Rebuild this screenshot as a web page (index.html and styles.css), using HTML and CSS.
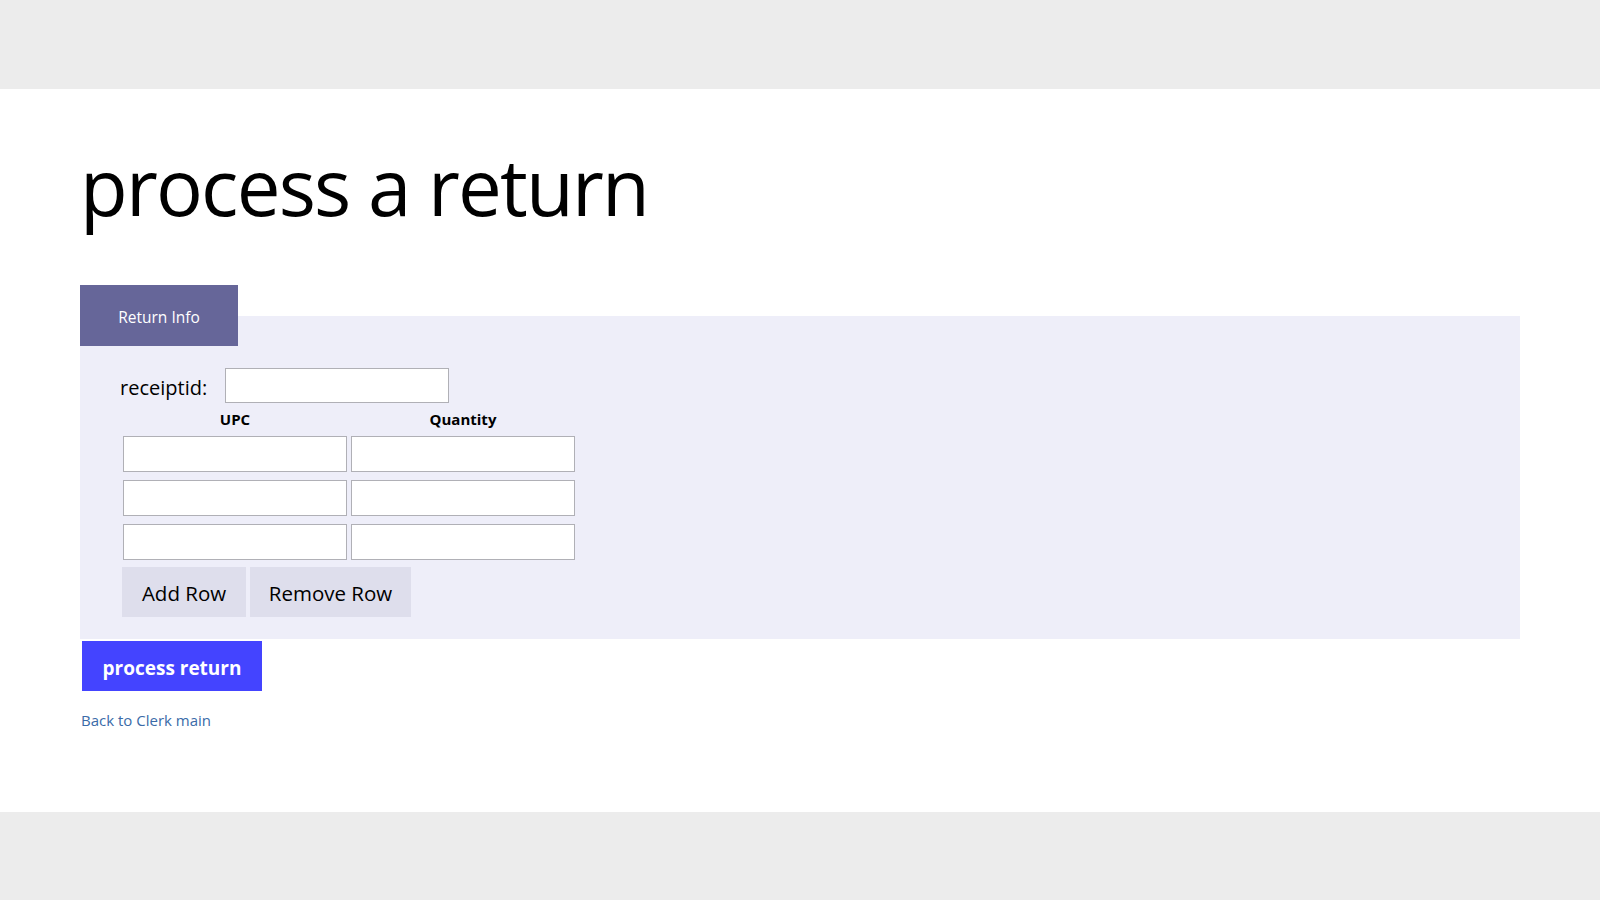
FILE: index.html
```html
<!DOCTYPE html>
<html lang="en">
<head>
<meta charset="utf-8">
<title>process a return</title>
<link rel="stylesheet" href="styles.css">
</head>
<body>
<header class="topbar"></header>
<main class="main">
  <h1 class="title">process a return</h1>
  <form class="form" action="#">
    <fieldset class="panel">
      <legend class="tab">Return Info</legend>
      <div class="panel-body">
        <div class="receipt-row">
          <label class="receipt-label" for="receiptid">receiptid:</label>
          <input class="field receipt-input" id="receiptid" type="text">
        </div>
        <div class="items">
          <div class="col-head">UPC</div>
          <div class="col-head">Quantity</div>
          <input class="field item-input" type="text">
          <input class="field item-input" type="text">
          <input class="field item-input" type="text">
          <input class="field item-input" type="text">
          <input class="field item-input" type="text">
          <input class="field item-input" type="text">
        </div>
        <div class="row-buttons">
          <button type="button" class="row-btn add-btn">Add Row</button>
          <button type="button" class="row-btn remove-btn">Remove Row</button>
        </div>
      </div>
    </fieldset>
    <button type="submit" class="submit">process return</button>
  </form>
  <a class="back" href="#">Back to Clerk main</a>
</main>
<footer class="bottombar"></footer>
</body>
</html>
```

FILE: styles.css
```css
html, body {
  margin: 0;
  padding: 0;
}

body {
  background: #ececec;
  font-family: "Open Sans", "Noto Sans", sans-serif;
  color: #000;
}

.topbar {
  height: 89px;
}

.main {
  background: #fff;
  height: 723px;
  box-sizing: border-box;
  padding: 0 80px;
  display: flex;
  flex-direction: column;
  align-items: flex-start;
}

.title {
  font-size: 78px;
  font-weight: 400;
  line-height: 104px;
  letter-spacing: -1.8px;
  margin: 45px 0 47px 0;
}

.form {
  align-self: stretch;
  display: flex;
  flex-direction: column;
  align-items: flex-start;
}

.panel {
  align-self: stretch;
  margin: 0;
  border: 0;
  min-width: 0;
  padding: 0 0 22px 0;
  background: #eeeef9;
}

.tab {
  box-sizing: border-box;
  display: flex;
  align-items: center;
  justify-content: center;
  padding: 3px 0 0 0;
  width: 158px;
  height: 61px;
  background: #666699;
  color: #fff;
  font-size: 15.5px;
}

.panel-body {
  padding: 0 40px;
}

.receipt-row {
  display: flex;
  align-items: center;
  margin-top: 22px;
}

.receipt-label {
  box-sizing: border-box;
  width: 105px;
  height: 35px;
  padding-top: 5px;
  font-size: 20px;
  line-height: 30px;
}

.field {
  box-sizing: border-box;
  border: 1px solid #b0b0b6;
  background: #fff;
  margin: 0;
  padding: 2px 6px;
  font-family: inherit;
  font-size: 16px;
}

.receipt-input {
  width: 224px;
  height: 35px;
}

.items {
  display: grid;
  grid-template-columns: 224px 224px;
  column-gap: 4px;
  row-gap: 8px;
  margin: 7px 0 0 3px;
}

.col-head {
  text-align: center;
  font-weight: 700;
  font-size: 15px;
  line-height: 19px;
  height: 18px;
}

.item-input {
  width: 224px;
  height: 36px;
}

.row-buttons {
  display: flex;
  gap: 4px;
  margin: 7px 0 0 2px;
}

.row-btn {
  height: 50px;
  border: 0;
  background: #dedeec;
  color: #000;
  font-family: inherit;
  font-size: 20.5px;
  padding: 2px 0 0 0;
  margin: 0;
  text-align: center;
}

.add-btn {
  width: 124px;
}

.remove-btn {
  width: 161px;
}

.submit {
  margin: 2px 0 0 2px;
  width: 180px;
  height: 50px;
  border: 0;
  background: #4444ff;
  color: #fff;
  font-family: inherit;
  font-weight: 700;
  font-size: 19px;
  padding: 4px 0 0 0;
}

.back {
  margin: 19px 0 0 1px;
  font-size: 15px;
  line-height: 20px;
  color: #3a6ba8;
  text-decoration: none;
}

.bottombar {
  height: 88px;
}
```
